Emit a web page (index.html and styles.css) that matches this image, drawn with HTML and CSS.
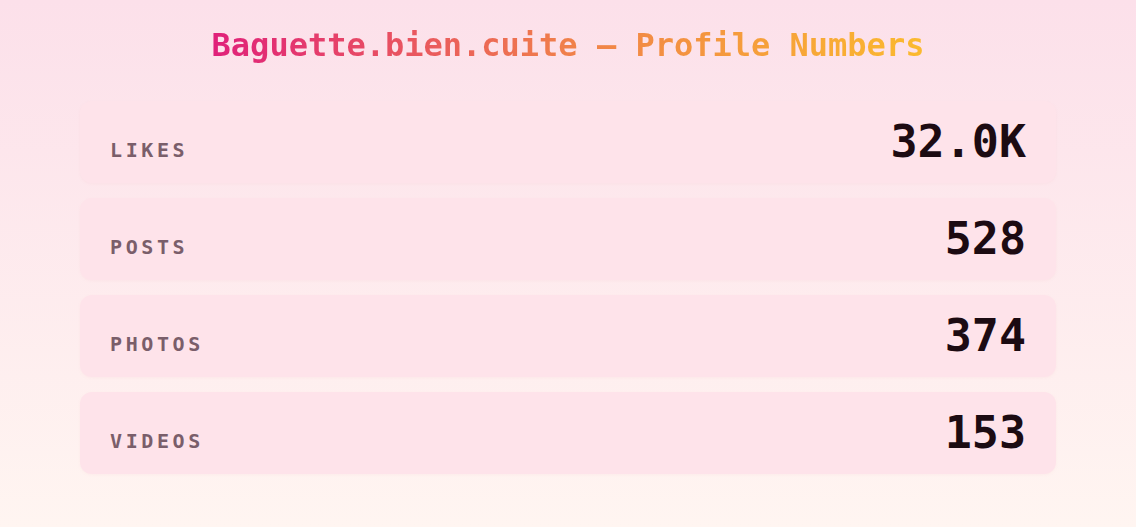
FILE: index.html
```html
<!DOCTYPE html>
<html lang="fr">
<head>
    <meta charset="UTF-8">
    <meta name="viewport" content="width=device-width, initial-scale=1.0">
    <title>Baguette.bien.cuite — Profile Numbers</title>
    <link rel="stylesheet" href="styles.css">
</head>
<body>
    <div class="container">
        <h1 class="title">Baguette.bien.cuite — Profile Numbers</h1>

        <div class="stats">
            <div class="stat">
                <span class="stat-label">Likes</span>
                <span class="stat-value">32.0K</span>
            </div>
            <div class="stat">
                <span class="stat-label">Posts</span>
                <span class="stat-value">528</span>
            </div>
            <div class="stat">
                <span class="stat-label">Photos</span>
                <span class="stat-value">374</span>
            </div>
            <div class="stat">
                <span class="stat-label">Videos</span>
                <span class="stat-value">153</span>
            </div>
        </div>
    </div>
</body>
</html>
```

FILE: styles.css
```css
* {
    margin: 0;
    padding: 0;
    box-sizing: border-box;
    font-family: 'DejaVu Sans Mono', monospace;
}

body {
    min-height: 100vh;
    background: linear-gradient(180deg, #fce0ea, #fff5f1);
}

.container {
    padding: 26px 80px;
}

.title {
    text-align: center;
    font-size: 32px;
    font-weight: 700;
    background: linear-gradient(90deg, #e0207a, #f0804a, #fbba2e);
    -webkit-background-clip: text;
    background-clip: text;
    color: transparent;
    width: max-content;
    margin: 0 auto 37px;
}

.stats {
    display: flex;
    flex-direction: column;
    gap: 15px;
}

.stat {
    display: flex;
    justify-content: space-between;
    align-items: baseline;
    background: #fee3ea;
    border-radius: 12px;
    padding: 15px 30px;
    box-shadow: 0 1px 3px rgba(230, 150, 170, 0.08);
}

/* label en petit, valeur en gros */
.stat-label {
    font-size: 20px;
    line-height: 1;
    font-weight: 700;
    letter-spacing: 0.18em;
    text-transform: uppercase;
    color: #7a5e6a;
}

.stat-value {
    font-size: 45px;
    line-height: 52px;
    font-weight: 700;
    color: #1c0b12;
}
```
